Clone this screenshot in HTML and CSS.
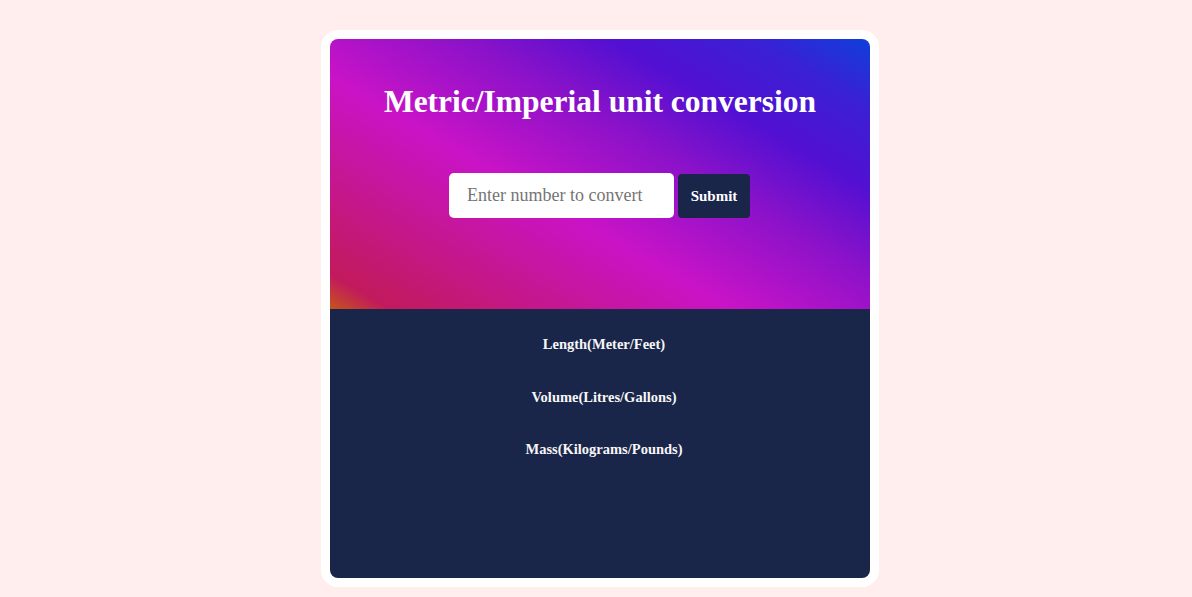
FILE: index.html
```html
<!DOCTYPE html>
<html lang="en">

<head>
  <meta charset="UTF-8">
  <meta name="viewport" content="width=device-width, initial-scale=1.0">
  <title>Unit Converter</title>
  <link rel="stylesheet" href="styles.css">
</head>

<body>
  <main class="card">
    <section class="top">
      <h1>Metric/Imperial unit conversion</h1>
      <form class="convert-form">
        <input class="number-input" type="text" inputmode="decimal" placeholder="Enter number to convert">
        <button class="submit-btn" type="submit">Submit</button>
      </form>
    </section>
    <section class="results">
      <p class="result">Length(Meter/Feet)</p>
      <p class="result">Volume(Litres/Gallons)</p>
      <p class="result">Mass(Kilograms/Pounds)</p>
    </section>
  </main>
</body>

</html>
```

FILE: styles.css
```css
body {
  margin: 0;
  padding: 30px 0 10px 8px;
  background: #ffeeed;
  font-family: "Liberation Serif", "Times New Roman", serif;
}

.card {
  width: 540px;
  margin: 0 auto;
  border: 9px solid #fff;
  border-radius: 17px;
  background: #fff;
}

.top {
  height: 270px;
  box-sizing: border-box;
  padding-top: 45px;
  border-radius: 8px 8px 0 0;
  background: linear-gradient(30deg, #c4541c 0%, #c21a5c 6%, #c913c7 40%, #8a12c9 60%, #5310d2 74%, #3a20d4 88%, #0f3fdb 100%);
  text-align: center;
}

h1 {
  margin: 0;
  font-size: 31.5px;
  color: #fff;
}

.convert-form {
  display: flex;
  justify-content: center;
  align-items: flex-end;
  gap: 4px;
  margin-top: 53px;
  padding-right: 1px;
}

.number-input {
  width: 225px;
  height: 45px;
  box-sizing: border-box;
  padding: 0 18px;
  border: none;
  border-radius: 5px;
  background: #fff;
  font-family: "Liberation Serif", "Times New Roman", serif;
  font-size: 18px;
  outline: none;
}

.number-input::placeholder {
  color: #757575;
}

.submit-btn {
  width: 72px;
  height: 44px;
  border: none;
  border-radius: 4px;
  background: #1a254a;
  color: #fff;
  font-family: "Liberation Serif", "Times New Roman", serif;
  font-size: 15px;
  font-weight: bold;
  cursor: pointer;
}

.results {
  height: 269px;
  box-sizing: border-box;
  padding: 9px 0 0 8px;
  border-radius: 0 0 8px 8px;
  background: #1a254a;
  text-align: center;
}

.result {
  margin: 0;
  padding: 18px 0;
  line-height: 16.5px;
  font-size: 14.5px;
  font-weight: bold;
  color: #f6f6f6;
}
```
